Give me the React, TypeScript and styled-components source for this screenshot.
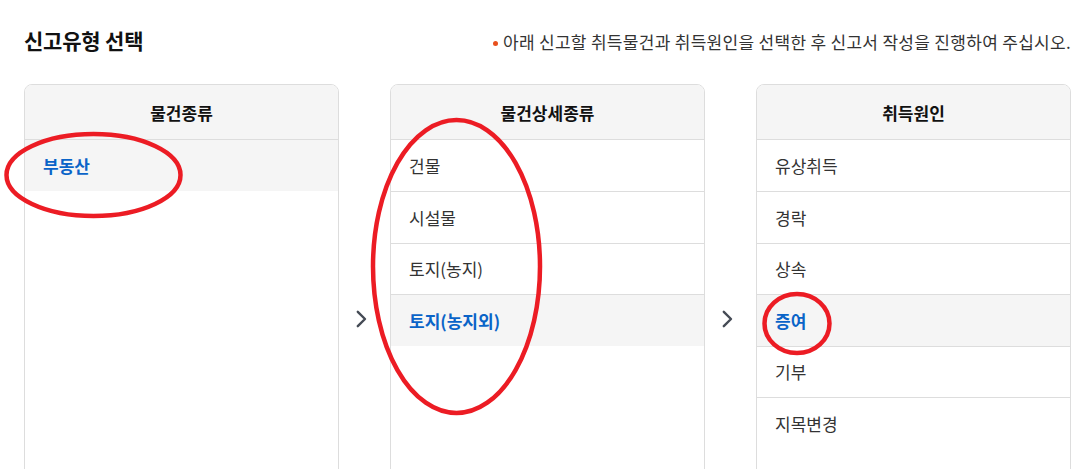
import React from "react";
import styled, { createGlobalStyle } from "styled-components";

const GlobalStyle = createGlobalStyle`
  html, body {
    margin: 0;
    padding: 0;
    overflow: hidden;
    background: #ffffff;
  }
  body {
    font-family: "Noto Sans CJK KR", "Noto Sans", sans-serif;
    color: #333333;
  }
  * { box-sizing: border-box; }
`;

const Page = styled.div`
  position: relative;
  width: 1075px;
  padding: 26px 4px 0 24px;
`;

const TopBar = styled.div`
  display: flex;
  align-items: center;
  justify-content: space-between;
  height: 28px;
  margin-bottom: 30px;
`;

const Title = styled.h2`
  margin: 0;
  font-size: 21px;
  font-weight: 700;
  color: #111111;
  line-height: 28px;
  letter-spacing: -0.2px;
`;

const Notice = styled.p`
  margin: 0;
  display: flex;
  align-items: center;
  gap: 5px;
  font-size: 17px;
  line-height: 28px;
  color: #333333;
  letter-spacing: 0.3px;
  padding-top: 3px;
`;

const Dot = styled.span`
  width: 5px;
  height: 5px;
  border-radius: 50%;
  background: #e8501d;
  margin-top: 3px;
`;

const Columns = styled.div`
  display: grid;
  grid-template-columns: 315px 51px 315px 51px 315px;
  align-items: center;
`;

const Panel = styled.section`
  height: 470px;
  border: 1px solid #dddddd;
  border-radius: 8px;
  overflow: hidden;
  background: #ffffff;
`;

const PanelHeader = styled.div`
  height: 55px;
  display: flex;
  align-items: center;
  justify-content: center;
  background: #f5f5f5;
  border-bottom: 1px solid #dddddd;
  font-size: 17px;
  font-weight: 700;
  color: #111111;
`;

const List = styled.ul`
  list-style: none;
  margin: 0;
  padding: 0;
`;

const Item = styled.li<{ $active?: boolean }>`
  height: 51.4px;
  display: flex;
  align-items: center;
  padding: 0 18px;
  font-size: 17px;
  font-weight: ${(p) => (p.$active ? 700 : 400)};
  color: ${(p) => (p.$active ? "#0a64c8" : "#333333")};
  background: ${(p) => (p.$active ? "#f5f5f5" : "#ffffff")};

  & + & {
    border-top: 1px solid #dddddd;
  }
`;

const Arrow = styled.div`
  display: flex;
  align-items: center;
  justify-content: center;
  padding-right: 7px;
`;

const Marks = styled.svg`
  position: absolute;
  left: 0;
  top: 0;
  width: 1075px;
  height: 469px;
  pointer-events: none;
`;

const Chevron = () => (
  <Arrow>
    <svg width="11" height="18" viewBox="0 0 11 18">
      <polyline
        points="1.8,1.8 9,9 1.8,16.2"
        fill="none"
        stroke="#454b55"
        strokeWidth="2.4"
        strokeLinecap="round"
        strokeLinejoin="round"
      />
    </svg>
  </Arrow>
);

type Col = { title: string; items: string[]; active: string };

const columns: Col[] = [
  { title: "물건종류", items: ["부동산"], active: "부동산" },
  {
    title: "물건상세종류",
    items: ["건물", "시설물", "토지(농지)", "토지(농지외)"],
    active: "토지(농지외)",
  },
  {
    title: "취득원인",
    items: ["유상취득", "경락", "상속", "증여", "기부", "지목변경"],
    active: "증여",
  },
];

const ColumnPanel = ({ col }: { col: Col }) => (
  <Panel>
    <PanelHeader>{col.title}</PanelHeader>
    <List>
      {col.items.map((it) => (
        <Item key={it} $active={it === col.active}>
          {it}
        </Item>
      ))}
    </List>
  </Panel>
);

export default function App() {
  return (
    <>
      <GlobalStyle />
      <Page>
        <TopBar>
          <Title>신고유형 선택</Title>
          <Notice>
            <Dot />
            아래 신고할 취득물건과 취득원인을 선택한 후 신고서 작성을 진행하여 주십시오.
          </Notice>
        </TopBar>
        <Columns>
          <ColumnPanel col={columns[0]} />
          <Chevron />
          <ColumnPanel col={columns[1]} />
          <Chevron />
          <ColumnPanel col={columns[2]} />
        </Columns>
        <Marks viewBox="0 0 1075 469">
          <g fill="none" stroke="#ec1c24" strokeWidth="4.5">
            <ellipse cx="93.5" cy="175" rx="87" ry="41" />
            <ellipse cx="456.5" cy="266.5" rx="83.5" ry="146.5" />
            <ellipse cx="797" cy="323.5" rx="32.5" ry="29.5" />
          </g>
        </Marks>
      </Page>
    </>
  );
}
